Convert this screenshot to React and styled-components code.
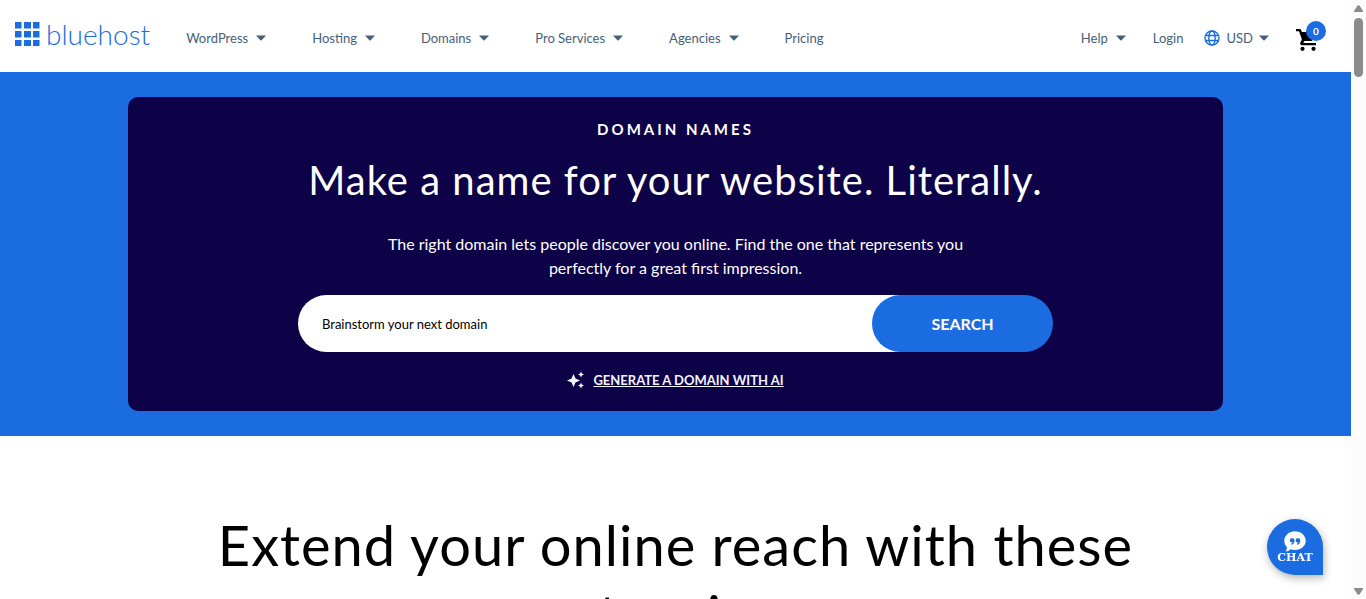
import React from "react";
import styled, { createGlobalStyle } from "styled-components";

const BLUE = "#1b6ce0";
const NAVY = "#0d0147";
const SLATE = "#46607c";
const SANS = `Lato, "Open Sans", sans-serif`;

const GlobalStyle = createGlobalStyle`
  *, *::before, *::after { box-sizing: border-box; }
  body { margin: 0; font-family: ${SANS}; background: #fff; color: #000; overflow: hidden; }
  h1, h2, p { margin: 0; font-weight: 400; }
`;

const Window = styled.div`
  display: flex;
  height: 100vh;
  overflow: hidden;
`;

const Page = styled.div`
  flex: 1;
  min-width: 0;
`;

const Header = styled.header`
  display: flex;
  align-items: center;
  justify-content: space-between;
  height: 72px;
  padding: 0 25px 0 15px;
`;

const HeaderSide = styled.div`
  display: flex;
  align-items: center;
  gap: ${(p) => p.$gap};
`;

const Logo = styled.a`
  display: flex;
  align-items: center;
  gap: 6px;
  padding-bottom: 4px;
  color: ${BLUE};
  text-decoration: none;
  font: 300 28px/36px ${SANS};
`;

const Nav = styled.nav`
  display: flex;
  gap: 46px;
`;

const MenuButton = styled.button`
  display: flex;
  align-items: center;
  gap: ${(p) => p.$gap || "8px"};
  padding: 4px 0 0;
  border: 0;
  background: none;
  color: ${SLATE};
  font: 400 13px/20px ${SANS};
  cursor: pointer;
`;

const MenuLink = styled.a`
  padding-top: 4px;
  color: ${SLATE};
  font: 400 13px/20px ${SANS};
  text-decoration: none;
`;

const CartButton = styled.button`
  position: relative;
  display: flex;
  padding: 8px 6px 0 0;
  border: 0;
  background: none;
  cursor: pointer;
`;

const CartBadge = styled.span`
  position: absolute;
  top: 1px;
  right: 0;
  width: 20px;
  border-radius: 50%;
  background: ${BLUE};
  color: #fff;
  font: 700 10px/20px ${SANS};
  text-align: center;
`;

const Hero = styled.section`
  padding: 25px 128px;
  background: ${BLUE};
`;

const HeroPanel = styled.div`
  display: flex;
  flex-direction: column;
  align-items: center;
  padding: 20px 24px 19px;
  border-radius: 10px;
  background: ${NAVY};
  color: #fff;
  text-align: center;
`;

const Eyebrow = styled.p`
  font-size: 15px;
  font-weight: 700;
  line-height: 24px;
  letter-spacing: 3px;
`;

const HeroTitle = styled.h1`
  margin-top: 15px;
  font-size: 40px;
  line-height: 48px;
  letter-spacing: 1px;
`;

const HeroText = styled.p`
  max-width: 600px;
  margin-top: 28px;
  font-size: 16px;
  line-height: 24px;
`;

const SearchForm = styled.form`
  display: flex;
  width: 100%;
  max-width: 755px;
  height: 57px;
  margin-top: 15px;
`;

const SearchInput = styled.input`
  flex: 1;
  min-width: 0;
  margin-right: -29px;
  padding: 0 53px 0 24px;
  border: 0;
  border-radius: 29px 0 0 29px;
  outline: 0;
  background: #fff;
  font: 400 13px/20px ${SANS};
  color: #000;
  &::placeholder { color: #000; opacity: 1; }
`;

const SearchButton = styled.button`
  position: relative;
  width: 181px;
  border: 0;
  border-radius: 29px;
  background: ${BLUE};
  color: #fff;
  font: 700 16px/24px ${SANS};
  cursor: pointer;
`;

const AiLink = styled.a`
  display: flex;
  align-items: center;
  gap: 8px;
  margin-top: 16px;
  color: #f1f5ff;
  font-size: 13px;
  font-weight: 700;
  line-height: 24px;
  text-decoration: none;
  span { text-decoration: underline; }
`;

const Extensions = styled.section`
  padding: 74px 128px 0;
  text-align: center;
`;

const SectionTitle = styled.h2`
  max-width: 960px;
  margin: 0 auto;
  font-size: 56px;
  line-height: 70px;
  letter-spacing: 1px;
`;

const ChatButton = styled.button`
  position: fixed;
  right: 43px;
  bottom: 24px;
  display: flex;
  flex-direction: column;
  align-items: center;
  width: 56px;
  height: 56px;
  padding: 12px 0 0;
  border: 0;
  border-radius: 28px 28px 0 28px;
  background: ${BLUE};
  box-shadow: 1px 3px 8px rgba(0, 0, 0, 0.3);
  color: #fff;
  font: 700 11px/12px "DejaVu Serif", serif;
  cursor: pointer;
`;

const ScrollTrack = styled.div`
  display: flex;
  flex-direction: column;
  align-items: center;
  justify-content: space-between;
  width: 15px;
  padding: 5px 0 4px;
  background: #fcfcfc;
`;

const ScrollTop = styled.div`
  display: flex;
  flex-direction: column;
  align-items: center;
  gap: 6px;
`;

const ScrollThumb = styled.div`
  width: 9px;
  height: 59px;
  border-radius: 5px;
  background: #8b8b8b;
`;

const Caret = () => (
  <svg width="10" height="6" viewBox="0 0 10 6" fill={SLATE} aria-hidden="true">
    <path d="M0 .5h10L5.6 5.2a.9.9 0 0 1-1.2 0z" />
  </svg>
);

const LogoGrid = () => (
  <svg width="25" height="24" viewBox="0 0 25 24" fill={BLUE} aria-hidden="true">
    {[0, 9, 18].map((y) =>
      [0, 9, 18].map((x) => (
        <rect key={`${x}-${y}`} x={x} y={y} width={x === 9 ? 7 : 6.5} height="6.5" />
      ))
    )}
  </svg>
);

const Globe = () => (
  <svg width="16" height="16" viewBox="0 0 16 16" fill="none" stroke={BLUE} strokeWidth="1.4" aria-hidden="true">
    <circle cx="8" cy="8" r="7" />
    <ellipse cx="8" cy="8" rx="3.2" ry="7" />
    <path d="M1.5 5.5h13M1.5 10.5h13" />
  </svg>
);

const Cart = () => (
  <svg width="24" height="24" viewBox="0 0 24 24" aria-hidden="true">
    <path d="M0 1h4.5L6 4h14l-4 9H8.5l-1.200 2H20v2.200H6c-1.600 0-2.400-1.600-1.600-3l1.500-2.600L3 3.200H0z" />
    <circle cx="6.500" cy="20.800" r="2.100" />
    <circle cx="17.500" cy="20.800" r="2.100" />
  </svg>
);

const Sparkles = () => (
  <svg width="18" height="18" viewBox="0 0 18 18" fill="#f1f5ff" aria-hidden="true">
    <path d="M6.500 3 8.500 7.500 13 9.500 8.500 11.500 6.500 16 4.500 11.500 0 9.500 4.500 7.500zM14 .5l.9 2 2.100 1-2.100 1-.9 2-.9-2-2.100-1 2.100-1zM14 11.500l.9 2 2.100 1-2.100 1-.9 2-.9-2-2.100-1 2.100-1z" />
  </svg>
);

const Bubble = () => (
  <svg width="24" height="21" viewBox="0 0 24 21" aria-hidden="true">
    <path fill="#fff" d="M12 .3C17.900.3 22.700 4.500 22.700 9.700S17.900 19 12 19c-1.600 0-3.100-.3-4.400-.8-1.500 1.400-3.300 2.200-5.200 2.300 1.100-1.300 1.600-2.900 1.500-4.400C2.300 14.400 1.300 12.200 1.300 9.700 1.300 4.500 6.100.3 12 .3z" />
    <path fill={BLUE} d="M9.300 7.200a2.300 2.300 0 0 1 2.300 2.400c0 2.300-1.300 4-3.300 4.400v-1.300c.8-.3 1.200-.8 1.300-1.400A2.100 2.100 0 1 1 9.300 7.200zM15 7.200a2.300 2.300 0 0 1 2.300 2.400c0 2.300-1.300 4-3.300 4.400v-1.300c.8-.3 1.200-.8 1.300-1.400A2.100 2.100 0 1 1 15 7.200z" />
  </svg>
);

const Arrow = ({ down }) => (
  <svg width="9" height="7" viewBox="0 0 9 7" fill="#8b8b8b">
    <path d={down ? "M0 0h9v1L5.500 6.500h-2L0 1z" : "M0 7h9V6L5.500.5h-2L0 6z"} />
  </svg>
);

const menus = ["WordPress", "Hosting", "Domains", "Pro Services", "Agencies"];

export default function App() {
  return (
    <Window>
      <GlobalStyle />
      <Page>
        <Header>
          <HeaderSide $gap="36px">
            <Logo href="#home"><LogoGrid />bluehost</Logo>
            <Nav aria-label="Main">
              {menus.map((name) => (
                <MenuButton key={name} type="button">{name}<Caret /></MenuButton>
              ))}
              <MenuLink href="#pricing">Pricing</MenuLink>
            </Nav>
          </HeaderSide>
          <HeaderSide $gap="27px">
            <MenuButton type="button">Help<Caret /></MenuButton>
            <HeaderSide $gap="21px">
              <MenuLink href="#login">Login</MenuLink>
              <MenuButton type="button" $gap="6px"><Globe />USD<Caret /></MenuButton>
            </HeaderSide>
            <CartButton type="button" aria-label="Cart">
              <Cart />
              <CartBadge>0</CartBadge>
            </CartButton>
          </HeaderSide>
        </Header>
        <main>
          <Hero>
            <HeroPanel>
              <Eyebrow>DOMAIN NAMES</Eyebrow>
              <HeroTitle>Make a name for your website. Literally.</HeroTitle>
              <HeroText>
                The right domain lets people discover you online. Find the one that represents you
                perfectly for a great first impression.
              </HeroText>
              <SearchForm onSubmit={(e) => e.preventDefault()}>
                <SearchInput type="text" aria-label="Domain name" placeholder="Brainstorm your next domain" />
                <SearchButton type="submit">SEARCH</SearchButton>
              </SearchForm>
              <AiLink href="#ai"><Sparkles /><span>GENERATE A DOMAIN WITH AI</span></AiLink>
            </HeroPanel>
          </Hero>
          <Extensions>
            <SectionTitle>Extend your online reach with these extensions</SectionTitle>
          </Extensions>
        </main>
      </Page>
      <ChatButton type="button"><Bubble />CHAT</ChatButton>
      <ScrollTrack aria-hidden="true">
        <ScrollTop><Arrow /><ScrollThumb /></ScrollTop>
        <Arrow down />
      </ScrollTrack>
    </Window>
  );
}
